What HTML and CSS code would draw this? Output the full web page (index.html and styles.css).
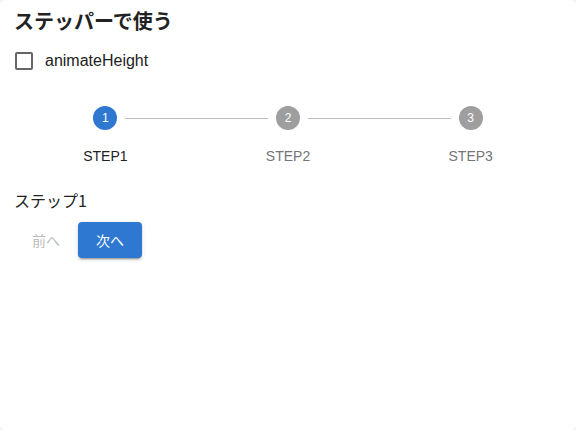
FILE: index.html
```html
<!DOCTYPE html>
<html lang="ja">
<head>
    <meta charset="UTF-8">
    <meta name="viewport" content="width=device-width, initial-scale=1.0">
    <link rel="stylesheet" href="styles.css">
    <title>ステッパーで使う</title>
</head>
<body>
    <div class="card">
        <h1 class="title">ステッパーで使う</h1>
        <label class="check-row">
            <span class="checkbox"></span>
            <span class="check-label">animateHeight</span>
        </label>
        <div class="stepper">
            <div class="step active">
                <div class="step-icon">1</div>
                <div class="step-label">STEP1</div>
            </div>
            <div class="step">
                <div class="connector"></div>
                <div class="step-icon">2</div>
                <div class="step-label">STEP2</div>
            </div>
            <div class="step">
                <div class="connector"></div>
                <div class="step-icon">3</div>
                <div class="step-label">STEP3</div>
            </div>
        </div>
        <p class="step-content">ステップ1</p>
        <div class="actions">
            <button class="btn btn-text" disabled>前へ</button>
            <button class="btn btn-primary">次へ</button>
        </div>
    </div>
</body>
</html>
```

FILE: styles.css
```css
*{
    margin: 0;
    padding: 0;
    box-sizing: border-box;
}
body{
    font-family: "Liberation Sans", "Noto Sans CJK JP", sans-serif;
    color: #212121;
    background: #fff;
}
.card{
    width: 576px;
    height: 430px;
    padding: 0 14px;
    border-radius: 4px;
    box-shadow: 0 0 1px rgba(0,0,0,0.35);
    overflow: hidden;
}
.title{
    padding-top: 7px;
    font-size: 20px;
    line-height: 28px;
    font-weight: 700;
    font-family: "Noto Sans CJK JP", sans-serif;
    color: #222;
}
.check-row{
    display: flex;
    align-items: center;
    margin-top: 14px;
    height: 24px;
}
.checkbox{
    width: 18px;
    height: 18px;
    margin-left: 1px;
    border: 2px solid #666;
    border-radius: 2px;
}
.check-label{
    margin-left: 12px;
    font-size: 16px;
    color: #222;
}
.stepper{
    display: flex;
    margin-top: 33px;
}
.step{
    flex: 1;
    position: relative;
    display: flex;
    flex-direction: column;
    align-items: center;
}
.connector{
    position: absolute;
    top: 12px;
    left: calc(-50% + 20px);
    right: calc(50% + 20px);
    border-top: 1px solid #bdbdbd;
}
.step-icon{
    width: 24px;
    height: 24px;
    border-radius: 50%;
    background: #9e9e9e;
    color: #fff;
    font-size: 12px;
    line-height: 24px;
    text-align: center;
}
.step.active .step-icon{
    background: #2f78d1;
}
.step-label{
    margin-top: 16px;
    font-size: 14px;
    line-height: 20px;
    color: #757575;
}
.step.active .step-label{
    color: #212121;
}
.step-content{
    margin-top: 22px;
    font-size: 16px;
    line-height: 24px;
    font-family: "Noto Sans CJK JP", sans-serif;
    color: #222;
}
.actions{
    display: flex;
    margin-top: 10px;
}
.btn{
    min-width: 64px;
    height: 36px;
    padding: 0 16px;
    border: none;
    border-radius: 4px;
    font-size: 14px;
    font-family: "Noto Sans CJK JP", sans-serif;
    background: none;
    cursor: pointer;
}
.btn-text{
    color: #bdbdbd;
    cursor: default;
}
.btn-primary{
    color: #fff;
    background: #2f78d1;
    box-shadow: 0 3px 1px -2px rgba(0,0,0,0.2), 0 2px 2px 0 rgba(0,0,0,0.14), 0 1px 5px 0 rgba(0,0,0,0.12);
}
```
